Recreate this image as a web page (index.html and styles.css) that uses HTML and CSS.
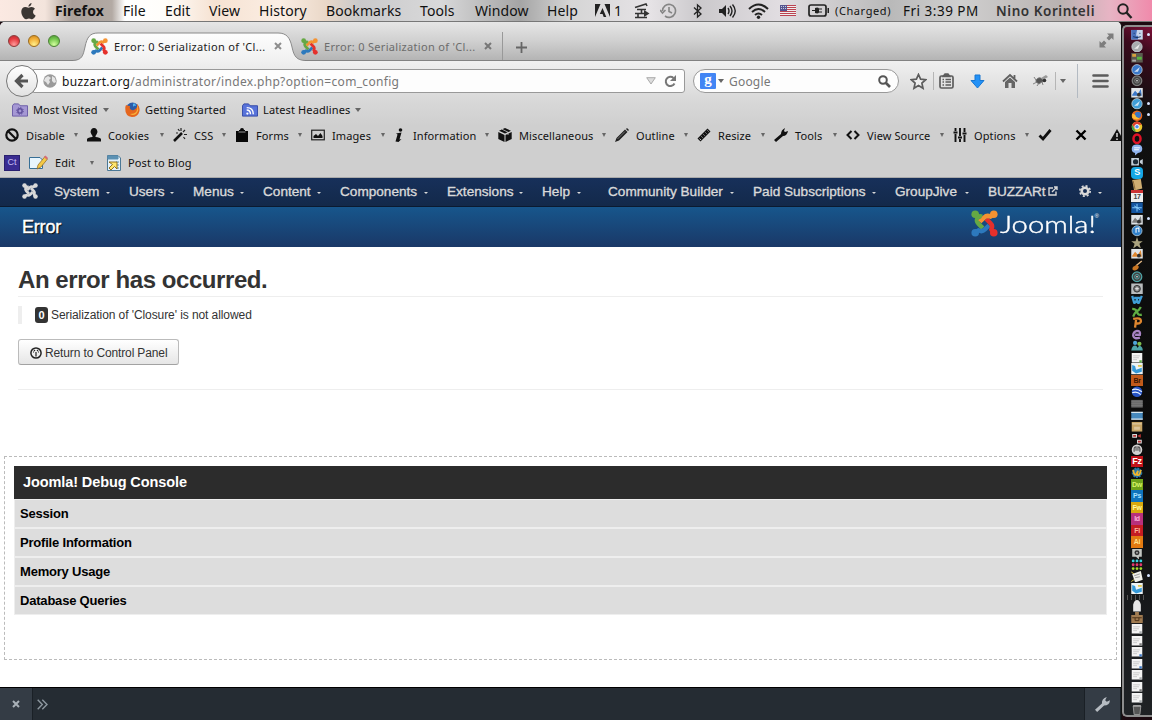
FILE: index.html
```html
<!DOCTYPE html>
<html lang="en">

<head>
    <meta charset="UTF-8">
    <title>Error: 0 Serialization of 'Closure' is not allowed</title>
    <link rel="stylesheet" href="styles.css">
</head>

<body>
    <!-- shared shapes -->
    <svg class="defs" width="0" height="0">
        <defs>
            <symbol id="joomla" viewBox="0 0 32 32">
                <g fill="none" stroke-width="5.2" stroke-linejoin="round">
                    <path class="j-green" d="M5 5L8 9Q5.500 13 9 16.500L14 21.500" />
                    <path class="j-blue" d="M5 27L9 24Q13 26.500 16.500 23L21.500 18" />
                    <path class="j-red" d="M27 27L24 23Q26.500 19 23 15.500L18 10.500" />
                    <path class="j-orange" d="M27 5L23 8Q19 5.500 15.500 9L10.500 14" />
                    <path class="j-green" d="M5 5L9 8Q11 7 13 8" />
                </g>
                <circle class="j-green-f" cx="5" cy="5" r="4.5" />
                <circle class="j-orange-f" cx="27" cy="5" r="4.5" />
                <circle class="j-red-f" cx="27" cy="27" r="4.5" />
                <circle class="j-blue-f" cx="5" cy="27" r="4.5" />
            </symbol>
            <symbol id="disc" viewBox="0 0 12 12">
                <circle cx="6" cy="6" r="5.4" fill="currentColor" stroke="#c8d2d8" stroke-width=".8" />
                <path d="M3 8L9 3L7 8Z" fill="#fff" opacity=".75" />
            </symbol>
            <symbol id="ring" viewBox="0 0 12 12">
                <circle cx="6" cy="6" r="5" fill="#444" stroke="currentColor" stroke-width="1.3" />
                <circle cx="6" cy="6" r="2.4" fill="none" stroke="currentColor" />
                <circle cx="6" cy="6" r=".8" fill="#fff" />
            </symbol>
            <symbol id="sheet" viewBox="0 0 12 12">
                <path d="M.5 1H11.500V11H.5Z" fill="#f4f4f4" />
                <path d="M2 4H9M2 6H8M2 8H6" stroke="#b5b5b5" stroke-width=".7" />
                <path d="M8.500 8.500h2.500v2.500H8.500Z" fill="currentColor" />
            </symbol>
            <symbol id="box" viewBox="0 0 12 12">
                <rect x=".5" y="1" width="11" height="10" fill="currentColor" />
                <path d="M1 3H11" stroke="#fff" opacity=".5" />
                <path d="M3 6H9V9H3Z" fill="#fff" opacity=".35" />
            </symbol>
            <symbol id="photo" viewBox="0 0 12 12">
                <rect x="0" y="1" width="12" height="10" fill="#dfe3e6" />
                <path d="M1 8L4 4L7 7L10 2L11 9H1Z" fill="currentColor" />
                <circle cx="8" cy="8" r="2" fill="#333" />
            </symbol>
            <symbol id="tool" viewBox="0 0 12 12">
                <path d="M1 1H6V5H1ZM6 7H11V11H6Z" fill="#d8d8d8" />
                <path d="M2 2H5V4H2ZM7 8H10V10H7ZM6 3L10 1V5Z" fill="currentColor" />
            </symbol>
            <symbol id="finder" viewBox="0 0 12 12">
                <rect y="1" width="12" height="10" fill="#c7d5ec" />
                <path d="M0 1H6L5 7H7V11H0Z" fill="#4a72bd" />
                <path d="M3 4V5M9 4V5M2 8Q6 10 10 8" fill="none" stroke="#17315f" />
            </symbol>
            <symbol id="map" viewBox="0 0 12 12">
                <rect width="12" height="12" fill="#eef4f5" />
                <path d="M1 2L4 3L5 7L11 5V9L5 11L1 8Z" fill="#3599d8" />
                <path d="M7 2H11V4H7Z" fill="#e5c84c" />
            </symbol>
            <symbol id="people" viewBox="0 0 12 12">
                <circle cx="4" cy="3" r="2.2" fill="#4fa5d8" />
                <circle cx="8.5" cy="4" r="2.2" fill="#7dbb4d" />
                <path d="M0 11Q1 5 5 6Q7 7 7 11ZM6 11Q7 6 9 6Q12 7 12 11Z" fill="currentColor" />
            </symbol>
        </defs>
    </svg>

    <header class="menubar">
        <svg width="17" height="18" viewBox="0 0 17 18">
            <path d="M11.6 1Q11.4 4 8.4 4.7Q8.4 2 11.6 1ZM8.5 5.7Q10 5 11.6 5Q13.800 5.200 15 6.800Q12.800 8.200 13 10.300Q13.200 12.800 15.700 13.800Q14 17.200 12.300 17.300Q11.200 17.300 10.300 16.800Q8.600 16.200 7 17Q5.600 17.600 4.600 16.800Q1 13.300 1.300 9Q2 5.200 5.300 5Q6.800 5 8.500 5.700Z" fill="#3b3633" />
        </svg>
        <b>Firefox</b>
        <span>File</span>
        <span>Edit</span>
        <span>View</span>
        <span>History</span>
        <span>Bookmarks</span>
        <span>Tools</span>
        <span>Window</span>
        <span>Help</span>
        <svg width="15" height="13" viewBox="0 0 15 13">
            <path d="M0 0H5.500L0 13ZM9.500 0H15V13ZM7.500 4L11.300 13H8.700L7.600 10H4.800Z" fill="#222" />
        </svg>
        <span>1</span>
        <svg width="16" height="16" viewBox="0 0 16 16">
            <path d="M1 4.500L12 1L13 3M3 6.500H12M7.500 7V10M1 10.500H10M4 10.500V14.500M1 14.500H13" fill="none" stroke="#333" stroke-width="1.600" />
            <path d="M10 7L15.500 10.500L10 14Z" fill="#333" />
        </svg>
        <svg width="17" height="16" viewBox="0 0 17 16">
            <path d="M2.500 8A6.500 6.500 0 1 1 5 13M9 4V8.500L12 10M0 7L2.500 10L5.500 7" fill="none" stroke="#858585" stroke-width="1.600" />
        </svg>
        <svg width="11" height="16" viewBox="0 0 11 16">
            <path d="M2 4.500L9 11L5.500 14V2L9 5L2 11.500" fill="none" stroke="#222" stroke-width="1.300" />
        </svg>
        <svg width="19" height="16" viewBox="0 0 19 16">
            <path d="M1 6H4L8 2V14L4 10H1Z" fill="#222" />
            <path d="M10 5Q12 8 10 11M12 3Q16 8 12 13M14.500 1.500Q20 8 14.500 14.500" fill="none" stroke="#222" stroke-width="1.400" />
        </svg>
        <svg width="21" height="16" viewBox="0 0 21 16">
            <path d="M1 6Q10.500 -3 20 6M4 9Q10.500 3 17 9M7 12Q10.500 9 14 12" fill="none" stroke="#222" stroke-width="2" />
            <circle cx="10.500" cy="14.200" r="1.700" fill="#222" />
        </svg>
        <svg width="16" height="11" viewBox="0 0 16 11">
            <rect width="16" height="11" fill="#eee" />
            <path d="M0 .5H16M0 2.500H16M0 4.500H16M0 6.500H16M0 8.500H16M0 10.500H16" stroke="#bb4351" />
            <rect width="7" height="6" fill="#54558f" />
            <path d="M1 1.500H7M1 3.500H7" stroke="#c5c5df" stroke-dasharray="1 1" />
        </svg>
        <svg width="22" height="13" viewBox="0 0 22 13">
            <rect x="1" y="1" width="17" height="11" rx="2" fill="none" stroke="#222" stroke-width="1.700" />
            <path d="M19.500 4H21V9H19.500ZM4 6H7V4Q10 3 11 4.500H14V5.500H11V7.500H14V8.500H11Q10 10 7 9V7H4Z" fill="#222" />
        </svg>
        <span class="charged">(Charged)</span>
        <span class="clock">Fri 3:39 PM</span>
        <span class="user">Nino Korinteli</span>
        <svg width="16" height="16" viewBox="0 0 16 16">
            <circle cx="6" cy="6" r="4.700" fill="none" stroke="#222" stroke-width="2" />
            <path d="M9.500 9.500L14.500 15" stroke="#222" stroke-width="2.400" />
        </svg>
    </header>

    <main class="window">
        <div class="tabstrip">
            <div class="lights">
                <i class="red"></i><i class="yellow"></i><i class="green"></i>
            </div>
            <div class="tab active">
                <svg class="tab-shape" width="232" height="30" viewBox="0 0 232 30">
                    <defs>
                        <linearGradient id="tabfill" x1="0" y1="0" x2="0" y2="1">
                            <stop offset="0" stop-color="#fdfdfd" />
                            <stop offset="1" stop-color="#f0f0f0" />
                        </linearGradient>
                    </defs>
                    <path d="M0 28.500C9 28 10 24 12 15C14 5 17 1 25 1H205C214 1 217 6 219 15C221 25 224 28 232 28.500V30H0Z" fill="url(#tabfill)" />
                    <path d="M0 28.500C9 28 10 24 12 15C14 5 17 1 25 1H205C214 1 217 6 219 15C221 25 224 28 232 28.500" fill="none" stroke="#8a8a8a" />
                </svg>
                <svg class="joomla-fav" width="17" height="17"><use href="#joomla" /></svg>
                <span>Error: 0 Serialization of 'Cl...</span>
                <svg class="tab-close" width="8" height="8" viewBox="0 0 8 8"><path d="M1 1L7 7M7 1L1 7" stroke="#8d8d8d" stroke-width="2" /></svg>
            </div>
            <div class="tab">
                <svg class="joomla-fav" width="17" height="17"><use href="#joomla" /></svg>
                <span>Error: 0 Serialization of 'Cl...</span>
                <svg class="tab-close" width="8" height="8" viewBox="0 0 8 8"><path d="M1 1L7 7M7 1L1 7" stroke="#777" stroke-width="2" /></svg>
            </div>
            <svg class="new-tab" width="11" height="11" viewBox="0 0 11 11"><path d="M5.500 0V11M0 5.500H11" stroke="#666" stroke-width="1.800" /></svg>
            <svg class="expand" width="15" height="15" viewBox="0 0 15 15">
                <path d="M8 0.500H14.500V7L12.500 5L10 7.500L7.500 5L10 2.500ZM7 14.500H.5V8L2.500 10L5 7.500L7.500 10L5 12.500Z" fill="#7d7d7d" />
            </svg>
        </div>

        <div class="toolbars">
            <div class="navrow">
                <div class="back">
                    <svg width="16" height="16" viewBox="0 0 16 16"><path d="M14 8H4M8.500 2L2.500 8L8.500 14" fill="none" stroke="#555" stroke-width="3.200" /></svg>
                </div>
                <div class="urlbar">
                    <svg width="14" height="14" viewBox="0 0 14 14">
                        <circle cx="7" cy="7" r="6.700" fill="#9a9a9a" />
                        <path d="M2 4L5 2L8 4L6 6L7 8L5 11L3 8L1 7ZM9 2L12 4L13 8L11 9L9 7Z" fill="#e4e4e4" />
                    </svg>
                    <span class="url"><em>buzzart.org</em>/administrator/index.php?option=com_config</span>
                    <svg width="10" height="8" viewBox="0 0 10 8"><path d="M.7 .7H9.300L5 7Z" fill="#ddd" stroke="#aaa" /></svg>
                    <svg width="13" height="13" viewBox="0 0 13 13">
                        <path d="M10.500 8.500A4.600 4.600 0 1 1 9.500 3" fill="none" stroke="#777" stroke-width="2" />
                        <path d="M12 0V6H6Z" fill="#777" />
                    </svg>
                </div>
                <div class="searchbar">
                    <span class="g">g</span>
                    <i class="caret"></i>
                    <span class="placeholder">Google</span>
                    <svg width="13" height="13" viewBox="0 0 13 13">
                        <circle cx="5" cy="5" r="3.800" fill="none" stroke="#555" stroke-width="2" />
                        <path d="M8 8L12 12" stroke="#555" stroke-width="2.600" />
                    </svg>
                </div>
                <div class="navicons">
                    <svg width="17" height="17" viewBox="0 0 17 17"><path d="M8.500 1.500L10.600 6.200L15.700 6.700L11.900 10.100L13 15.200L8.500 12.500L4 15.200L5.100 10.100L1.300 6.700L6.400 6.200Z" fill="#eee" stroke="#5c5c5c" stroke-width="1.700" /></svg>
                    <i class="sep"></i>
                    <svg width="15" height="16" viewBox="0 0 15 16">
                        <rect x="1" y="3" width="13" height="12" rx="1.500" fill="none" stroke="#5c5c5c" stroke-width="1.700" />
                        <path d="M4 3.500L6 1H9L11 3.500ZM3.500 6.500H5M6.500 6.500H12M3.500 9H5M6.500 9H12M3.500 12H5M6.500 12H12" fill="#5c5c5c" stroke="#5c5c5c" stroke-width="1.400" />
                    </svg>
                    <svg width="15" height="15" viewBox="0 0 15 15"><path d="M5 1H10V6.500H14L7.500 14L1 6.500H5Z" fill="#2391f6" stroke="#1777d2" /></svg>
                    <svg width="16" height="16" viewBox="0 0 16 16">
                        <path d="M1 8.500L8 2L15 8.500M12.500 2V6" fill="none" stroke="#606060" stroke-width="1.800" />
                        <path d="M3 9L8 4.500L13 9V15H9.500V10H6.500V15H3Z" fill="#666" />
                    </svg>
                    <svg width="16" height="14" viewBox="0 0 16 14">
                        <path d="M3 6Q6 2 9 5Q12 3 12 7Q8 8 6 10L3 8ZM3 6L1 3M4 8L0 10M6 9L4 12M9 8L10 11" fill="#555" stroke="#777" stroke-width=".9" />
                        <path d="M8 4L13 1L15 3L10 6Z" fill="#999" />
                        <circle cx="11.500" cy="6.500" r="1.800" fill="#333" />
                    </svg>
                    <i class="sep"></i>
                    <i class="caret"></i>
                    <i class="sep tall"></i>
                    <svg width="17" height="14" viewBox="0 0 17 14"><path d="M1.500 1.500H15.500M1.500 7H15.500M1.500 12.500H15.500" stroke="#5c5c5c" stroke-width="2.600" stroke-linecap="round" /></svg>
                </div>
            </div>

            <div class="bookmarks">
                <a>
                    <svg width="16" height="14" viewBox="0 0 17 14"><path d="M.5 2.500L2 .5H7L8.500 2.500H16.500V13.500H.5Z" fill="#a598d4" stroke="#695aa5" /><circle cx="8.500" cy="8" r="2.300" fill="none" stroke="#5e4f9b" stroke-width="1.500" /><circle cx="8.500" cy="8" r="3.600" fill="none" stroke="#5e4f9b" stroke-width="1" stroke-dasharray="1.400 1.400" /></svg>
                    Most Visited <i class="caret"></i>
                </a>
                <a>
                    <svg width="15" height="15" viewBox="0 0 15 15"><circle cx="7.500" cy="7" r="6.500" fill="#2b5ca8" /><path d="M8 2Q10 0 11 4Q9 3 8 5Z" fill="#54b5ef" /><path d="M1 3Q3 4 5 4Q4 7 7 8Q10 9 12 5L12 2Q15 5 14.500 9Q13 15 7 15Q0 14 .3 7Q0 5 1 3Z" fill="#e5661e" /><path d="M12 3Q15 8 11 12Q8 14 5 12Q14 12 12 3Z" fill="#f9b13a" /></svg>
                    Getting Started
                </a>
                <a>
                    <svg width="16" height="14" viewBox="0 0 17 14"><path d="M.5 2.500L2 .5H7L8.500 2.500H16.500V13.500H.5Z" fill="#5873da" stroke="#3247a6" /><path d="M5 7Q9 7 9 11.500M5 4.500Q12 4.500 12 11.500" fill="none" stroke="#fff" stroke-width="1.500" /><circle cx="5.700" cy="10.800" r="1.200" fill="#fff" /></svg>
                    Latest Headlines <i class="caret"></i>
                </a>
            </div>

            <div class="webdev">
                <a><svg viewBox="0 0 14 14"><path d="M2.500 2.500L11.500 11.500" stroke="#111" stroke-width="2.200" /><circle cx="7" cy="7" r="5.700" fill="none" stroke="#111" stroke-width="2.200" /></svg>Disable<i class="caret"></i></a>
                <a><svg viewBox="0 0 14 14"><path d="M3.500 4Q4 0 7 0Q10 0 10.500 4Q10 6 8.500 8V9Q13 9.500 14 11V13.500H0V11Q1 9.500 5.500 9V8Q4 6 3.500 4Z" fill="#111" /></svg>Cookies<i class="caret"></i></a>
                <a><svg viewBox="0 0 14 14"><path d="M1 13L9 5" stroke="#111" stroke-width="2.500" /><path d="M8 0V3M12 2L10 4M11 6.500H14M5 1L6.500 3M10.500 9L12 11M3 5H5" stroke="#222" stroke-width="1.200" /></svg>CSS<i class="caret"></i></a>
                <a><svg viewBox="0 0 14 14"><path d="M1 3H4V2H5Q5 0 7 0Q9 0 9 2H10V3H13V14H1Z" fill="#080808" /><path d="M3.500 4H10.500" stroke="#bbb" stroke-width=".8" /></svg>Forms<i class="caret"></i></a>
                <a><svg viewBox="0 0 14 14"><rect x=".7" y="2.200" width="12.600" height="9.600" fill="none" stroke="#222" stroke-width="1.200" /><path d="M2.500 10V8L5 6L7 8L9.500 5L11.500 8V10Z" fill="#111" /></svg>Images<i class="caret"></i></a>
                <a><svg viewBox="0 0 14 14"><circle cx="6.500" cy="2" r="1.800" fill="#111" /><path d="M2 5.500L7.500 4.500L5.500 11.500L7.500 11L4.500 14L1.500 13.500L3.500 6.500Z" fill="#111" /></svg>Information<i class="caret"></i></a>
                <a><svg viewBox="0 0 14 14"><path d="M7 0L13 2.800L7 5.600L1 2.800ZM.3 4L6.500 7V14L.3 11ZM13.700 4L7.500 7V14L13.700 11Z" fill="#111" /><path d="M4 1.200L10 4.200V7" fill="none" stroke="#ccc" stroke-width=".8" /></svg>Miscellaneous<i class="caret"></i></a>
                <a><svg viewBox="0 0 14 14"><path d="M0 14L1.500 10L10 1.500L12.500 4L4 12.500ZM11 1L12 0L14 2L13 3Z" fill="#222" /><path d="M2.500 11L10 3.500" stroke="#888" stroke-width=".8" /></svg>Outline<i class="caret"></i></a>
                <a><svg viewBox="0 0 14 14"><path d="M.5 10.500L10.500 .5L13.500 3.500L3.500 13.500Z" fill="#111" /><path d="M2.500 10.500L4 12M4.500 8.500L5.500 9.500M6.500 6.500L7.500 7.500M8.500 4.500L9.500 5.500M10.500 2.500L11.500 3.500" stroke="#ccc" stroke-width=".9" /></svg>Resize<i class="caret"></i></a>
                <a><svg viewBox="0 0 14 14"><path d="M0 12L7 6Q7 2 11 0L10 3L11 4L14 3Q13 8 9 8L2 14Z" fill="#111" /></svg>Tools<i class="caret"></i></a>
                <a><svg viewBox="0 0 14 14"><path d="M5.500 3L1.500 7L5.500 11M8.500 3L12.500 7L8.500 11" fill="none" stroke="#111" stroke-width="2" /></svg>View Source<i class="caret"></i></a>
                <a><svg viewBox="0 0 14 14"><path d="M2.500 0V3M2.500 6V14M7 0V8M7 11V14M11.500 0V4M11.500 7V14M.5 4.500H4.500M5 9.500H9M9.500 5.500H13.500" stroke="#111" stroke-width="1.900" /></svg>Options<i class="caret"></i></a>
                <a><svg viewBox="0 0 14 14"><path d="M1.500 7.500L5 11L12.500 2" fill="none" stroke="#111" stroke-width="2.800" /></svg></a>
                <a><svg viewBox="0 0 14 14"><path d="M1.500 2.500L10.500 11.500M10.500 2.500L1.500 11.500" stroke="#000" stroke-width="2.400" /></svg></a>
                <a><svg viewBox="0 0 14 14"><path d="M7 1L14 13H0Z" fill="#111" /><path d="M7 5V9M7 10.500V12" stroke="#ddd" stroke-width="1.500" /></svg></a>
            </div>

            <div class="editrow">
                <b class="ct">Ct</b>
                <svg width="19" height="16" viewBox="0 0 19 16"><path d="M.5 2.500H11L13.500 5V13.500H.5Z" fill="#e8f5fd" stroke="#376f96" /><path d="M8 14L9 10L16 1.500L18.500 4L12 12Z" fill="#f4c945" stroke="#8b6322" stroke-width=".7" /><path d="M15 2L16.500 .5L19 3L17.500 4.500Z" fill="#d86a75" /></svg>
                <span>Edit</span>
                <i class="caret"></i>
                <svg width="15" height="16" viewBox="0 0 15 16"><path d="M.5 .5H11L13.500 3V15.500H.5Z" fill="#e6f2fa" stroke="#4b7896" /><path d="M1 1H11V4H1ZM9 7H12M9 10H12M9 13H12" fill="#5c91b3" stroke="#5c91b3" /><path d="M2 7H10V14L7.500 11.500L4 15L2 13L5.500 9.500Z" fill="#ffe66d" stroke="#8a6713" stroke-width=".9" /></svg>
                <span>Post to Blog</span>
            </div>
        </div>

        <section class="page">
            <nav class="admin-nav">
                <svg class="mono" width="16" height="16"><use href="#joomla" /></svg>
                <a>System<i class="caret"></i></a>
                <a>Users<i class="caret"></i></a>
                <a>Menus<i class="caret"></i></a>
                <a>Content<i class="caret"></i></a>
                <a>Components<i class="caret"></i></a>
                <a>Extensions<i class="caret"></i></a>
                <a class="wide-gap">Help<i class="caret"></i></a>
                <a>Community Builder<i class="caret"></i></a>
                <a>Paid Subscriptions<i class="caret"></i></a>
                <a>GroupJive<i class="caret"></i></a>
                <a class="site">BUZZARt
                    <svg width="10" height="10" viewBox="0 0 10 10"><path d="M5 2H1V9H8V5.500M4 6L9 1M6 1H9V4" fill="none" stroke="#d9d9d9" stroke-width="1.400" /></svg>
                </a>
                <a class="gear">
                    <svg width="12" height="12" viewBox="0 0 12 12"><circle cx="6" cy="6" r="3.300" fill="none" stroke="#d9d9d9" stroke-width="2.600" /><circle cx="6" cy="6" r="5.200" fill="none" stroke="#d9d9d9" stroke-width="1.600" stroke-dasharray="2.040 2.040" /></svg>
                    <i class="caret"></i>
                </a>
            </nav>
            <div class="titlebar">
                <h1>Error</h1>
                <div class="brand">
                    <svg width="27" height="27"><use href="#joomla" /></svg>
                    <span class="wordmark">Joomla!</span>
                    <sup>®</sup>
                </div>
            </div>

            <div class="content">
                <h2>An error has occurred.</h2>
                <blockquote><span class="badge">0</span> Serialization of 'Closure' is not allowed</blockquote>
                <a class="btn">
                    <svg width="12" height="12" viewBox="0 0 12 12"><circle cx="6" cy="6" r="5.100" fill="none" stroke="#222" stroke-width="1.500" /><path d="M6 5V9.500M3 5H4M8 5H9M4 3L5 4M8 3L7 4" stroke="#222" stroke-width="1.200" /></svg>
                    Return to Control Panel
                </a>
                <hr>
            </div>

            <div class="debug">
                <h3>Joomla! Debug Console</h3>
                <div class="debug-row">Session</div>
                <div class="debug-row">Profile Information</div>
                <div class="debug-row">Memory Usage</div>
                <div class="debug-row">Database Queries</div>
            </div>
        </section>

        <footer class="devbar">
            <div class="dev-close"><svg width="8" height="8" viewBox="0 0 8 8"><path d="M1 1L7 7M7 1L1 7" stroke="#a9b1b8" stroke-width="2" /></svg></div>
            <svg class="chevrons" width="11" height="11" viewBox="0 0 11 11"><path d="M.7 .7L5.300 5.500L.7 10.300M5.300 .7L10 5.500L5.300 10.300" fill="none" stroke="#8d979f" stroke-width="1.400" /></svg>
            <div class="dev-tools"><svg width="15" height="15" viewBox="0 0 14 14"><path d="M0 12L6.500 6Q6 1.500 11 0L9.500 3L11 4.500L14 3Q13.500 8 8.500 8L2 14Z" fill="#b6bcc2" /></svg></div>
        </footer>
    </main>

    <aside class="dock">
        <div class="dock-list">
            <svg><use href="#finder" /></svg>
            <svg class="c-silver"><use href="#disc" /></svg>
            <svg viewBox="0 0 12 12"><path d="M0 1H12V11H0Z" fill="#5b5b50" /><path d="M1 2H5V5H1Z" fill="#d8a03c" /><path d="M6 5H11V8H6Z" fill="#56b53e" /><path d="M1 8H5V10H1Z" fill="#aaa" /></svg>
            <svg class="c-blue"><use href="#disc" /></svg>
            <svg class="c-grey"><use href="#ring" /></svg>
            <svg class="c-blue"><use href="#photo" /></svg>
            <svg class="c-sky"><use href="#disc" /></svg>
            <svg viewBox="0 0 12 12"><circle cx="6" cy="6" r="5.500" fill="#e8691d" /><circle cx="7" cy="5" r="3.300" fill="#3976c5" /><path d="M1 4Q4 4 5 7L9 9Q4 11 1 8Z" fill="#ffba34" /></svg>
            <svg viewBox="0 0 12 12"><circle cx="6" cy="6" r="5.500" fill="#e9c62d" /><path d="M1 4Q3 .5 6 .5Q9 .5 11 4H6L4 8Z" fill="#df3f30" /><path d="M1 4L5 11.400Q0 10 .6 5Z" fill="#3ca24b" /><circle cx="6" cy="6" r="2.300" fill="#4b8ff0" stroke="#fff" /></svg>
            <svg viewBox="0 0 12 12"><ellipse cx="6" cy="6" rx="3.700" ry="4.500" fill="none" stroke="#df1226" stroke-width="2.600" /></svg>
            <svg viewBox="0 0 12 12"><path d="M.5 5Q.5 .5 6 .5Q11.500 .5 11.500 5Q11.500 9 7 9.500L4 12V9.500Q.5 9 .5 5Z" fill="#8fb3ee" /><path d="M3 4H9M3 6H8" stroke="#fff" /></svg>
            <svg viewBox="0 0 12 12"><path d="M0 2H8V10H0ZM9 5L12 3V9L9 7Z" fill="#c3ced8" /><circle cx="4.500" cy="6" r="2.700" fill="#1e2b37" /></svg>
            <b class="app skype">S</b>
            <svg viewBox="0 0 12 12"><path d="M1 1L10 0L11.500 10L3 12Z" fill="#cfae72" /><path d="M2 2L4 11" stroke="#8c6b38" /></svg>
            <b class="app cal">17</b>
            <svg viewBox="0 0 12 12"><rect y=".5" width="12" height="11" fill="#1455a0" /><path d="M6 2V10M1 6H11M3 4L9 8" stroke="#8ad0ff" /></svg>
            <svg class="c-grey"><use href="#photo" /></svg>
            <svg viewBox="0 0 12 12"><circle cx="6" cy="6" r="5.200" fill="#2e7fca" stroke="#9bb9cf" /><path d="M5 8V3.500L8 3V7.500" fill="none" stroke="#fff" stroke-width="1.100" /></svg>
            <svg viewBox="0 0 12 12"><path d="M6 0L7.500 4.500H12L8.500 7L10 12L6 9L2 12L3.500 7L0 4.500H4.500Z" fill="#aaa37f" /></svg>
            <svg class="c-orange"><use href="#photo" /></svg>
            <svg viewBox="0 0 12 12"><path d="M11 1L5 6" stroke="#e0b683" stroke-width="1.500" /><path d="M6 5L8 7Q7 11 3 11Q0 10 2 7Z" fill="#c87522" /></svg>
            <svg class="c-teal"><use href="#ring" /></svg>
            <svg viewBox="0 0 12 12"><rect y=".5" width="12" height="11" fill="#b9bcbd" /><circle cx="6" cy="6" r="3.500" fill="#777" stroke="#333" /><path d="M4 6H8M6 4V8" stroke="#eee" /></svg>
            <!-- office suite -->
            <svg class="c-sky" viewBox="0 0 12 12"><path d="M1 2L3 9Q5 10 6 5Q6 10 8 9L11 2M3 4H10" fill="none" stroke="currentColor" stroke-width="2.400" /></svg>
            <svg class="c-green" viewBox="0 0 12 12"><path d="M1 3Q5 3 6 6Q7 10 11 9M10 1Q8 5 5 6Q3 8 2 11" fill="none" stroke="currentColor" stroke-width="2.400" /></svg>
            <svg class="c-orange" viewBox="0 0 12 12"><path d="M2 2Q11 0 10 5Q8 8 4 6M5 3L4 11" fill="none" stroke="currentColor" stroke-width="2.400" /></svg>
            <svg class="c-violet" viewBox="0 0 12 12"><path d="M4 6H9Q10 2 6 2Q2 3 2 7Q3 11 9 9" fill="none" stroke="currentColor" stroke-width="2.400" /></svg>
            <svg class="c-teal"><use href="#people" /></svg>
            <svg class="c-green"><use href="#sheet" /></svg>
            <svg><use href="#map" /></svg>
            <b class="app br">Br</b>
            <svg viewBox="0 0 12 12"><circle cx="6" cy="6" r="5.500" fill="#2754c5" /><path d="M1 4Q6 2 11 6M1 7Q6 5 10 9" fill="none" stroke="#e7f1ff" stroke-width="1.300" /></svg>
            <svg viewBox="0 0 12 12"><path d="M0 2H12V10H0Z" fill="#666" /><path d="M0 4H12M0 6H12M0 8H12" stroke="#888" stroke-width=".6" /></svg>
            <svg viewBox="0 0 12 12"><path d="M0 2H12V10H0Z" fill="#4689bd" /><path d="M0 2.500H12M0 9.500H12" stroke="#d7e5ed" stroke-width="1.500" /></svg>
            <svg class="c-tan"><use href="#box" /></svg>
            <svg class="c-red"><use href="#tool" /></svg>
            <svg viewBox="0 0 12 12"><circle cx="6" cy="6" r="5.500" fill="#d2d2d2" /><path d="M3 8V5Q3 3 5 3V7M7 7V3Q9 3 9 5V8" fill="none" stroke="#555" stroke-width="1.200" /></svg>
            <b class="app fz">Fz</b>
            <svg viewBox="0 0 12 12"><circle cx="6" cy="6" r="4.500" fill="#2878a8" stroke="#2878a8" stroke-width="2" stroke-dasharray="2 1" /><path d="M2 3Q3 9 5 8L7 4L6 8Q9 10 10 3" fill="none" stroke="#f0b62d" stroke-width="1.800" /></svg>
            <b class="app dw">Dw</b>
            <b class="app ps">Ps</b>
            <b class="app fw">Fw</b>
            <b class="app id">Id</b>
            <b class="app fl">Fl</b>
            <b class="app ai">Ai</b>
            <svg viewBox="0 0 12 12"><path d="M1 1H11V9H8V12L5 9H1Z" fill="#c3c6c2" /><circle cx="6" cy="5" r="2.600" fill="#333" /><circle cx="6" cy="5" r="1" fill="#aaa" /></svg>
            <svg viewBox="0 0 12 12"><g fill="none" stroke-width="3" stroke-linecap="round" stroke-dasharray="0 4"><path d="M2 2H11" stroke="#3ad3df" /><path d="M2 6H11" stroke="#e5376e" /><path d="M2 10H11" stroke="#a8dc2e" /></g></svg>
            <svg viewBox="0 0 12 12"><path d="M1 3L10 0L12 9L4 12Z" fill="#f0f0ea" /><path d="M3 5L9 3M4 7L9 6" stroke="#999" /><path d="M0 1L3 3M0 11L3 9" stroke="#dfc94a" /></svg>
            <svg><use href="#map" /></svg>
        </div>
        <div class="dock-sep"></div>
        <div class="dock-list">
            <svg viewBox="0 0 12 12"><path d="M2 12V5Q3 0 6 0Q9 0 10 5V12Z" fill="#e6e6e6" /></svg>
            <svg viewBox="0 0 12 12"><path d="M4 3V0H8V3H12V12H0V3Z" fill="#a07b51" /><path d="M1 6H11M4 6V9H8V6" fill="none" stroke="#4d3218" /></svg>
            <svg class="c-silver"><use href="#sheet" /></svg>
            <svg class="c-grey"><use href="#sheet" /></svg>
            <svg class="c-blue"><use href="#sheet" /></svg>
            <svg class="c-blue"><use href="#sheet" /></svg>
            <svg class="c-silver"><use href="#sheet" /></svg>
            <svg class="c-grey"><use href="#sheet" /></svg>
            <svg class="c-silver"><use href="#sheet" /></svg>
            <svg viewBox="0 0 12 12"><path d="M2 2L3 11H9L10 2Z" fill="#555" stroke="#999" /><path d="M2 2H10" stroke="#ccc" /></svg>
        </div>
        <i class="dot dot-1"></i><i class="dot dot-2"></i><i class="dot dot-3"></i><i class="dot dot-4"></i><i class="dot dot-5"></i>
    </aside>
</body>

</html>
```
FILE: styles.css
```css
* {
    box-sizing: border-box;
}

body {
    margin: 0;
    width: 1152px;
    height: 720px;
    overflow: hidden;
    display: grid;
    grid-template-columns: 1122px 30px;
    grid-template-rows: 22px 698px;
    background: #1c0a10;
    font-family: "Noto Sans", "Open Sans", sans-serif;
    font-size: 11px;
    color: #111;
}

svg {
    display: block;
    flex: none;
}

.defs {
    position: absolute;
}

.caret {
    flex: none;
    width: 0;
    height: 0;
    border: 3.5px solid transparent;
    border-top: 4px solid #666;
    border-bottom: 0;
}

/* joomla mark */
.j-green { stroke: #65a844; }
.j-orange { stroke: #f59331; }
.j-red { stroke: #e5302c; }
.j-blue { stroke: #2d79bd; }
.j-green-f { fill: #65a844; }
.j-orange-f { fill: #f59331; }
.j-red-f { fill: #e5302c; }
.j-blue-f { fill: #2d79bd; }

/* mac menu bar */
.menubar {
    grid-column: 1 / 3;
    display: grid;
    grid-template-columns: 35px 68px 42px 44px 50px 67px 94px 55px 72px 48px 19px 20px 26px 32px 26px 30px 32px 28px 27px 68px 93px 121px 16px;
    align-items: center;
    padding-left: 20px;
    font-size: 14px;
    letter-spacing: 0.1px;
    line-height: 20px;
    white-space: nowrap;
    border-bottom: 1px solid #777;
    background: linear-gradient(90deg, #fbe9e2 0, #f3e4dc 45px, #aaa09a 72px, #b3aaa4 112px, #fff 125px, #fffdfa 165px, #f6e2d2 215px, #fbeee4 280px, #ead8c8 325px, #c9c9ca 360px, #d9d9da 440px, #a5a5a5 520px, #d5d5d5 570px, #e6e3e6 650px, #cbc9cc 700px, #e1dde1 780px, #b9b9b9 890px, #cfcfcf 960px, #b9b3b1 1060px, #e7b4c4 1110px, #f08aab 1152px);
}

.menubar .charged {
    font-size: 11px;
    letter-spacing: 0.6px;
}

.menubar .clock {
    font-size: 13.5px;
    letter-spacing: 0.5px;
}

.menubar .user {
    font-size: 13.5px;
    font-weight: 600;
    letter-spacing: 0.55px;
    color: #333;
}

/* browser window */
.window {
    display: flex;
    flex-direction: column;
    width: 1122px;
    border-right: 1px solid #111;
    border-radius: 5px 5px 0 0;
    overflow: hidden;
    background: #fff;
}

.tabstrip {
    flex: none;
    display: flex;
    align-items: center;
    height: 39px;
    padding-top: 10px;
    background: linear-gradient(#e6e6e6, #d0d0d0 50%, #b4b4b4);
    border-bottom: 1px solid #828282;
}

.lights {
    display: flex;
    gap: 8px;
    width: 74px;
    padding-left: 8px;
    margin-top: -10px;
}

.lights i {
    width: 12px;
    height: 12px;
    border-radius: 50%;
    border: 1px solid #8b3a3a;
    background: radial-gradient(circle at 50% 85%, #ff9a9a, #e4393f 60%, #b52b30);
}

.lights .yellow {
    border-color: #9a6a1c;
    background: radial-gradient(circle at 50% 85%, #fff08a, #f1ad36 60%, #c8841e);
}

.lights .green {
    border-color: #4b8036;
    background: radial-gradient(circle at 50% 85%, #d3ff9f, #72c54c 60%, #4b9233);
}

.tab {
    position: relative;
    display: flex;
    align-items: center;
    width: 202px;
    height: 28px;
    color: #6c6c6c;
    letter-spacing: 0.31px;
    white-space: nowrap;
    border-right: 1px solid #999;
}

.tab.active {
    width: 227px;
    padding-left: 17px;
    color: #222;
    border: 0;
}

.tab-shape {
    position: absolute;
    left: -1px;
    top: 0;
}

.joomla-fav {
    position: relative;
    margin-right: 6px;
}

.tab span {
    position: relative;
    width: 151px;
}

.tab-close {
    position: relative;
    margin-left: 9px;
}

.new-tab {
    margin: 2px 0 0 13px;
}

.expand {
    margin: -11px 7px 0 auto;
}

.toolbars {
    flex: none;
    height: 117px;
    background: linear-gradient(#f0f0f0, #d8d8d8 40px, #cfcfcf 65px);
    border-bottom: 1px solid #aaa;
}

.navrow {
    display: flex;
    align-items: center;
    height: 40px;
    padding-left: 6px;
}

.back {
    position: relative;
    z-index: 1;
    display: grid;
    place-items: center;
    width: 32px;
    height: 32px;
    border: 1px solid #777;
    border-radius: 50%;
    background: linear-gradient(#fff, #e2e2e2);
}

.urlbar {
    display: flex;
    align-items: center;
    width: 652px;
    height: 24px;
    margin-left: -5px;
    padding: 0 7px 0 9px;
    gap: 5px;
    border: 1px solid #999;
    border-radius: 0 3px 3px 0;
    background: #fdfdfd;
}

.url {
    flex: 1;
    color: #777;
    font-size: 12px;
    letter-spacing: 0.32px;
}

.url em {
    font-style: normal;
    color: #111;
}

.urlbar svg:last-child {
    margin-left: 3px;
}

.searchbar {
    display: flex;
    align-items: center;
    width: 206px;
    height: 24px;
    margin-left: 8px;
    padding: 0 7px 0 6px;
    border: 1px solid #999;
    border-radius: 12px;
    background: #fdfdfd;
}

.g {
    width: 16px;
    height: 16px;
    margin-right: 2px;
    border-radius: 1px;
    background: #4285f4;
    color: #fff;
    font: bold 15px/12px "Liberation Serif", serif;
    text-align: center;
}

.placeholder {
    flex: 1;
    margin-left: 5px;
    font-size: 12px;
    letter-spacing: 0.2px;
    color: #777;
}

.navicons {
    display: grid;
    grid-template-columns: 23px 6px 31px 32px 31px 22px 5px 17px 15px 17px;
    align-items: center;
    margin-left: 11px;
}

.sep {
    width: 1px;
    height: 18px;
    background: #b5b5b5;
}

.sep.tall {
    height: 34px;
    background: #b3bac2;
}

.bookmarks {
    display: grid;
    grid-template-columns: 113px 117px 130px;
    height: 17px;
    padding-left: 12px;
}

.bookmarks a {
    display: flex;
    align-items: center;
    gap: 5px;
    letter-spacing: 0.12px;
}

.webdev {
    display: grid;
    grid-template-columns: 82px 86px 62px 76px 83px 104px 117px 82px 77px 72px 107px 85px 37px 35px 14px;
    align-items: center;
    height: 34px;
    margin-right: -20px;
    padding-left: 5px;
}

.webdev a {
    display: flex;
    align-items: center;
    letter-spacing: 0.1px;
    white-space: nowrap;
}

.webdev svg {
    width: 14px;
    height: 14px;
    margin-right: 7px;
}

.webdev a:nth-child(6) svg {
    margin-right: 5px;
}

.webdev .caret {
    margin: 0 9px 0 auto;
    border-width: 4px 2.5px 0;
}

.editrow {
    display: grid;
    grid-template-columns: 25px 26px 35px 17px 21px 80px;
    align-items: center;
    height: 21px;
    padding-left: 4px;
    white-space: nowrap;
    letter-spacing: 0.1px;
}

.editrow .caret {
    border-width: 4px 2.5px 0;
}

.ct {
    width: 16px;
    height: 16px;
    background: #3a2c91;
    border: 1px solid #2a2170;
    color: #c6bef5;
    font: 9px/13px "Liberation Sans", sans-serif;
    text-align: center;
}

/* joomla admin page */
.page {
    flex: 1;
    font-family: "Liberation Sans", Arial, sans-serif;
    color: #333;
}

.admin-nav {
    display: grid;
    grid-template-columns: 32px 75px 64px 70px 77px 107px 95px 66px 145px 142px 93px 91px 34px;
    align-items: center;
    height: 29px;
    padding: 0 0 2px 22px;
    font-size: 13.6px;
    color: #d9d9d9;
    background: linear-gradient(#17305a, #13294a);
    border-bottom: 1px solid #0b1a30;
    white-space: nowrap;
}

.admin-nav a {
    display: flex;
    align-items: center;
    justify-content: space-between;
    padding-right: 19px;
    -webkit-text-stroke: 0.35px #d9d9d9;
}

.admin-nav .wide-gap {
    padding-right: 27px;
}

.admin-nav .caret {
    margin-top: 3px;
    border-width: 2.5px 2.5px 0;
    border-top-color: #d9d9d9;
}

.admin-nav .site {
    justify-content: flex-start;
    gap: 3px;
    letter-spacing: -0.1px;
}

.admin-nav .gear {
    padding-right: 11px;
}

.mono {
    filter: grayscale(1) brightness(0) invert(0.85);
}

.titlebar {
    display: flex;
    justify-content: space-between;
    height: 40px;
    padding: 0 22px;
    background: linear-gradient(#17568c, #1a3867);
}

.titlebar h1 {
    margin: 0;
    font-size: 18px;
    font-weight: normal;
    letter-spacing: -0.2px;
    line-height: 40px;
    color: #fff;
    -webkit-text-stroke: 0.4px #fff;
    text-shadow: 1px 1px 1px #000;
}

.brand {
    display: flex;
    width: 128px;
    padding-top: 3px;
    color: #fff;
}

.wordmark {
    margin-left: 2px;
    width: 94px;
    font: 300 24px/28px Lato, sans-serif;
    -webkit-text-stroke: 0.4px #fff;
    transform: scaleX(1.22);
    transform-origin: 0 0;
}

.brand sup {
    margin-left: 1px;
    font-size: 6px;
    line-height: 12px;
}

.content {
    height: 209px;
    padding: 18px 18px 0;
}

.content h2 {
    margin: 0;
    height: 32px;
    font-size: 24px;
    line-height: 30px;
    letter-spacing: -0.43px;
    border-bottom: 1px solid #eee;
}

blockquote {
    display: flex;
    align-items: center;
    height: 18px;
    margin: 9px 0 15px;
    padding-left: 13px;
    border-left: 4px solid #eee;
    font-size: 12px;
    letter-spacing: -0.08px;
}

.badge {
    width: 13px;
    height: 16px;
    margin-right: 3px;
    border-radius: 3px;
    background: #333;
    color: #fff;
    font-size: 11px;
    font-weight: bold;
    line-height: 17px;
    text-align: center;
}

.btn {
    display: flex;
    align-items: center;
    gap: 3px;
    width: 161px;
    height: 26px;
    padding: 1px 0 0 11px;
    border: 1px solid #bbb;
    border-bottom-color: #a2a2a2;
    border-radius: 3px;
    background: linear-gradient(#fff, #e6e6e6);
    font-size: 12px;
    letter-spacing: -0.13px;
    white-space: nowrap;
}

.content hr {
    margin: 24px 0 0;
    border: 0;
    border-top: 1px solid #eee;
}

.debug {
    width: 1113px;
    height: 204px;
    margin-left: 4px;
    padding: 9px 9px 0;
    border: 1px dashed #bbb;
    color: #000;
}

.debug h3 {
    height: 33px;
    margin: 0;
    padding-left: 9px;
    background: #2c2c2c;
    color: #fff;
    font-size: 14.5px;
    letter-spacing: -0.1px;
    line-height: 33px;
}

.debug-row {
    height: 29px;
    padding-left: 5px;
    border: 1px solid #eee;
    border-top-width: 1px;
    background: #ddd;
    font-size: 13px;
    font-weight: bold;
    letter-spacing: -0.2px;
    line-height: 28px;
}

.devbar {
    flex: none;
    display: flex;
    align-items: center;
    height: 33px;
    border-top: 1px solid #000;
    background: #252c33;
}

.dev-close,
.dev-tools {
    display: grid;
    place-items: center;
    width: 33px;
    height: 32px;
    background: #343c45;
    border-right: 1px solid #1a2026;
}

.chevrons {
    margin-left: 4px;
}

.dev-tools {
    width: 37px;
    margin-left: auto;
    border-left: 1px solid #1a2026;
}

/* dock */
.dock {
    position: relative;
    height: 692px;
    margin-top: 3px;
    padding: 2px 0 0 7px;
    border: 2px solid #8d8d8d;
    border-right: 0;
    border-radius: 5px 0 0 5px;
    background: linear-gradient(210deg, #7c1038 0, #3a0a1c 25px, #101010 75px, #0b0b0b 60%, #202326);
}

.dock-list {
    display: grid;
    grid-auto-rows: 11.54px;
}

.dock-list svg,
.app {
    width: 12px;
    height: 11.5px;
}

.app {
    font: bold 7px/11px "Liberation Sans", sans-serif;
    text-align: center;
    letter-spacing: -0.3px;
    color: #fff;
}

.skype { background: #16a7e5; border-radius: 4px; font-size: 9px; }
.cal { background: #eee; color: #444; border-top: 3px solid #c33; line-height: 8px; }
.br { background: #c15a1b; color: #3b1602; }
.fz { background: #c1121a; font-size: 9px; }
.dw { background: #6fa31b; color: #d9f56a; }
.ps { background: #0f74bd; color: #a9e2ff; }
.fw { background: #d9a90e; color: #fff8a0; }
.id { background: #b7307c; color: #ffb0dc; }
.fl { background: #c41c22; color: #ffb59b; }
.ai { background: #e27a12; color: #ffe08c; }

.c-blue { color: #3b78c9; }
.c-sky { color: #3f9ed8; }
.c-grey { color: #7d7d7d; }
.c-silver { color: #a9adaf; }
.c-green { color: #5fae44; }
.c-teal { color: #4ea5a8; }
.c-orange { color: #de862f; }
.c-violet { color: #a884c4; }
.c-tan { color: #c6a465; }
.c-red { color: #b53131; }

.dock-sep {
    height: 5px;
    width: 20px;
    margin: 1px 0 0 -4px;
    background: repeating-linear-gradient(90deg, #555 0 1px, transparent 1px 4px);
}

/* running app markers */
.dot {
    position: absolute;
    left: 23px;
    width: 3px;
    height: 3px;
    border-radius: 50%;
    background: #d7e4ff;
}

.dot-1 { top: 6px; }
.dot-2 { top: 75px; }
.dot-3 { top: 86px; }
.dot-4 { top: 190px; }
.dot-5 { top: 547px; }
```
